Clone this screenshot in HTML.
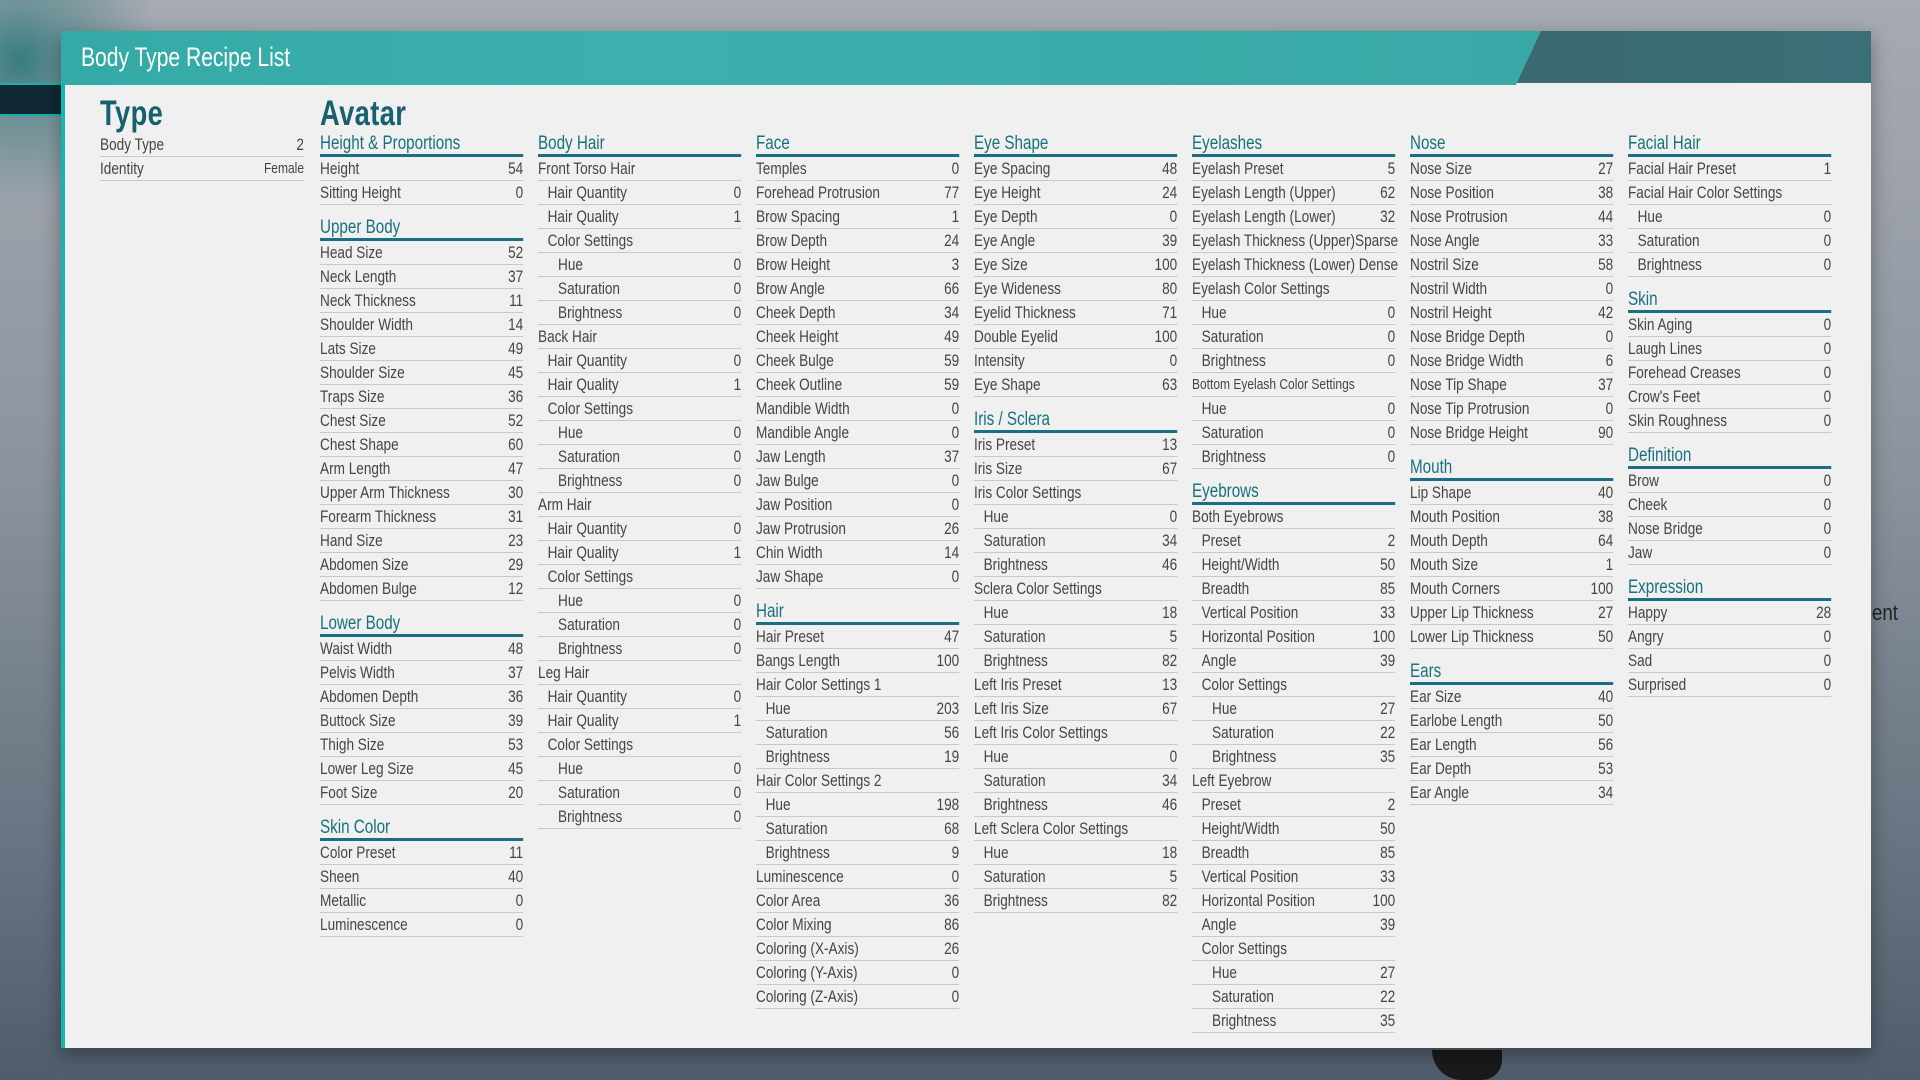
<!DOCTYPE html>
<html><head><meta charset="utf-8"><style>
*{margin:0;padding:0;box-sizing:border-box}
html,body{width:1920px;height:1080px;overflow:hidden}
body{background:linear-gradient(180deg,#a6aab2 0%,#8f96a0 40%,#6b7784 75%,#4f5d6b 100%);font-family:"Liberation Sans",sans-serif;position:relative}
.splat{position:absolute;left:0;top:0;width:300px;height:300px;background:radial-gradient(circle at 20px 60px,rgba(20,110,110,.75) 0,rgba(20,110,110,.4) 50px,rgba(20,110,110,0) 140px)}
.band{position:absolute;left:0;top:83px;width:62px;height:33px;background:#0f2833;border-top:2px solid #1ab0ab;border-bottom:2px solid #1ab0ab}
.panel{position:absolute;left:61px;top:31px;width:1810px;height:1017px;background:#f0f0f0;box-shadow:0 6px 18px rgba(0,0,0,.35)}
.lb{position:absolute;left:0;top:52px;width:4px;bottom:0;background:#16b6b0}
.hd{position:absolute;left:0;top:0;width:1810px;height:52px;background:linear-gradient(90deg,#3c4e58 0%,#3b6f78 100%)}
.hdt{position:absolute;left:0;top:0;width:1480px;height:54px;background:linear-gradient(90deg,#34aaa7,#3cb0ad 40%,#3aa8a6 100%);clip-path:polygon(0 0,100% 0,98.3% 100%,0 100%)}
.title{position:absolute;left:20px;top:11px;color:#fff;font-size:27px;transform:scaleX(.78);transform-origin:left;white-space:nowrap}
.big{position:absolute;top:94px;color:#17606e;font-size:35px;font-weight:bold;transform:scaleX(.78);transform-origin:left;letter-spacing:.5px}
.col{position:absolute;top:133px;width:254px;transform:scaleX(.8);transform-origin:left top;color:#454545;font-size:17px}
.r{height:24px;line-height:23px;border-bottom:1px solid #c9c9c9;display:flex;justify-content:space-between;white-space:nowrap}
.r b{font-weight:normal}
.h{height:24px;line-height:22px;border-bottom:3px solid #1a7080;color:#17717f;font-size:19px}
.g{margin-top:12px}
.i1{padding-left:12px}.i2{padding-left:25px}
.sm{font-size:15px}
.ent{position:absolute;left:1872px;top:600px;color:#222;font-size:22px;transform:scaleX(.85);transform-origin:left}
.boot{position:absolute;left:1432px;top:1050px;width:70px;height:30px;background:#1a1a1a;border-radius:0 0 20px 30px}
</style></head><body>
<div class="splat"></div>
<div class="band"></div>
<div class="ent">ent</div>
<div class="boot"></div>
<div class="panel">
<div class="hd"></div><div class="hdt"></div>
<div class="title">Body Type Recipe List</div>
<div class="lb"></div>
</div>
<div class="big" style="left:100px">Type</div>
<div class="big" style="left:320px">Avatar</div>

<div class="col" style="left:100px;width:255px">
<div class="r"><span>Body Type</span><b>2</b></div>
<div class="r"><span>Identity</span><b style="font-size:15px">Female</b></div>
</div>

<div class="col" style="left:320px">
<div class="h">Height &amp; Proportions</div>
<div class="r"><span>Height</span><b>54</b></div>
<div class="r"><span>Sitting Height</span><b>0</b></div>
<div class="h g">Upper Body</div>
<div class="r"><span>Head Size</span><b>52</b></div>
<div class="r"><span>Neck Length</span><b>37</b></div>
<div class="r"><span>Neck Thickness</span><b>11</b></div>
<div class="r"><span>Shoulder Width</span><b>14</b></div>
<div class="r"><span>Lats Size</span><b>49</b></div>
<div class="r"><span>Shoulder Size</span><b>45</b></div>
<div class="r"><span>Traps Size</span><b>36</b></div>
<div class="r"><span>Chest Size</span><b>52</b></div>
<div class="r"><span>Chest Shape</span><b>60</b></div>
<div class="r"><span>Arm Length</span><b>47</b></div>
<div class="r"><span>Upper Arm Thickness</span><b>30</b></div>
<div class="r"><span>Forearm Thickness</span><b>31</b></div>
<div class="r"><span>Hand Size</span><b>23</b></div>
<div class="r"><span>Abdomen Size</span><b>29</b></div>
<div class="r"><span>Abdomen Bulge</span><b>12</b></div>
<div class="h g">Lower Body</div>
<div class="r"><span>Waist Width</span><b>48</b></div>
<div class="r"><span>Pelvis Width</span><b>37</b></div>
<div class="r"><span>Abdomen Depth</span><b>36</b></div>
<div class="r"><span>Buttock Size</span><b>39</b></div>
<div class="r"><span>Thigh Size</span><b>53</b></div>
<div class="r"><span>Lower Leg Size</span><b>45</b></div>
<div class="r"><span>Foot Size</span><b>20</b></div>
<div class="h g">Skin Color</div>
<div class="r"><span>Color Preset</span><b>11</b></div>
<div class="r"><span>Sheen</span><b>40</b></div>
<div class="r"><span>Metallic</span><b>0</b></div>
<div class="r"><span>Luminescence</span><b>0</b></div>
</div>

<div class="col" style="left:538px">
<div class="h">Body Hair</div>
<div class="r"><span>Front Torso Hair</span><b></b></div>
<div class="r i1"><span>Hair Quantity</span><b>0</b></div>
<div class="r i1"><span>Hair Quality</span><b>1</b></div>
<div class="r i1"><span>Color Settings</span><b></b></div>
<div class="r i2"><span>Hue</span><b>0</b></div>
<div class="r i2"><span>Saturation</span><b>0</b></div>
<div class="r i2"><span>Brightness</span><b>0</b></div>
<div class="r"><span>Back Hair</span><b></b></div>
<div class="r i1"><span>Hair Quantity</span><b>0</b></div>
<div class="r i1"><span>Hair Quality</span><b>1</b></div>
<div class="r i1"><span>Color Settings</span><b></b></div>
<div class="r i2"><span>Hue</span><b>0</b></div>
<div class="r i2"><span>Saturation</span><b>0</b></div>
<div class="r i2"><span>Brightness</span><b>0</b></div>
<div class="r"><span>Arm Hair</span><b></b></div>
<div class="r i1"><span>Hair Quantity</span><b>0</b></div>
<div class="r i1"><span>Hair Quality</span><b>1</b></div>
<div class="r i1"><span>Color Settings</span><b></b></div>
<div class="r i2"><span>Hue</span><b>0</b></div>
<div class="r i2"><span>Saturation</span><b>0</b></div>
<div class="r i2"><span>Brightness</span><b>0</b></div>
<div class="r"><span>Leg Hair</span><b></b></div>
<div class="r i1"><span>Hair Quantity</span><b>0</b></div>
<div class="r i1"><span>Hair Quality</span><b>1</b></div>
<div class="r i1"><span>Color Settings</span><b></b></div>
<div class="r i2"><span>Hue</span><b>0</b></div>
<div class="r i2"><span>Saturation</span><b>0</b></div>
<div class="r i2"><span>Brightness</span><b>0</b></div>
</div>

<div class="col" style="left:756px">
<div class="h">Face</div>
<div class="r"><span>Temples</span><b>0</b></div>
<div class="r"><span>Forehead Protrusion</span><b>77</b></div>
<div class="r"><span>Brow Spacing</span><b>1</b></div>
<div class="r"><span>Brow Depth</span><b>24</b></div>
<div class="r"><span>Brow Height</span><b>3</b></div>
<div class="r"><span>Brow Angle</span><b>66</b></div>
<div class="r"><span>Cheek Depth</span><b>34</b></div>
<div class="r"><span>Cheek Height</span><b>49</b></div>
<div class="r"><span>Cheek Bulge</span><b>59</b></div>
<div class="r"><span>Cheek Outline</span><b>59</b></div>
<div class="r"><span>Mandible Width</span><b>0</b></div>
<div class="r"><span>Mandible Angle</span><b>0</b></div>
<div class="r"><span>Jaw Length</span><b>37</b></div>
<div class="r"><span>Jaw Bulge</span><b>0</b></div>
<div class="r"><span>Jaw Position</span><b>0</b></div>
<div class="r"><span>Jaw Protrusion</span><b>26</b></div>
<div class="r"><span>Chin Width</span><b>14</b></div>
<div class="r"><span>Jaw Shape</span><b>0</b></div>
<div class="h g">Hair</div>
<div class="r"><span>Hair Preset</span><b>47</b></div>
<div class="r"><span>Bangs Length</span><b>100</b></div>
<div class="r"><span>Hair Color Settings 1</span><b></b></div>
<div class="r i1"><span>Hue</span><b>203</b></div>
<div class="r i1"><span>Saturation</span><b>56</b></div>
<div class="r i1"><span>Brightness</span><b>19</b></div>
<div class="r"><span>Hair Color Settings 2</span><b></b></div>
<div class="r i1"><span>Hue</span><b>198</b></div>
<div class="r i1"><span>Saturation</span><b>68</b></div>
<div class="r i1"><span>Brightness</span><b>9</b></div>
<div class="r"><span>Luminescence</span><b>0</b></div>
<div class="r"><span>Color Area</span><b>36</b></div>
<div class="r"><span>Color Mixing</span><b>86</b></div>
<div class="r"><span>Coloring (X-Axis)</span><b>26</b></div>
<div class="r"><span>Coloring (Y-Axis)</span><b>0</b></div>
<div class="r"><span>Coloring (Z-Axis)</span><b>0</b></div>
</div>

<div class="col" style="left:974px">
<div class="h">Eye Shape</div>
<div class="r"><span>Eye Spacing</span><b>48</b></div>
<div class="r"><span>Eye Height</span><b>24</b></div>
<div class="r"><span>Eye Depth</span><b>0</b></div>
<div class="r"><span>Eye Angle</span><b>39</b></div>
<div class="r"><span>Eye Size</span><b>100</b></div>
<div class="r"><span>Eye Wideness</span><b>80</b></div>
<div class="r"><span>Eyelid Thickness</span><b>71</b></div>
<div class="r"><span>Double Eyelid</span><b>100</b></div>
<div class="r"><span>Intensity</span><b>0</b></div>
<div class="r"><span>Eye Shape</span><b>63</b></div>
<div class="h g">Iris / Sclera</div>
<div class="r"><span>Iris Preset</span><b>13</b></div>
<div class="r"><span>Iris Size</span><b>67</b></div>
<div class="r"><span>Iris Color Settings</span><b></b></div>
<div class="r i1"><span>Hue</span><b>0</b></div>
<div class="r i1"><span>Saturation</span><b>34</b></div>
<div class="r i1"><span>Brightness</span><b>46</b></div>
<div class="r"><span>Sclera Color Settings</span><b></b></div>
<div class="r i1"><span>Hue</span><b>18</b></div>
<div class="r i1"><span>Saturation</span><b>5</b></div>
<div class="r i1"><span>Brightness</span><b>82</b></div>
<div class="r"><span>Left Iris Preset</span><b>13</b></div>
<div class="r"><span>Left Iris Size</span><b>67</b></div>
<div class="r"><span>Left Iris Color Settings</span><b></b></div>
<div class="r i1"><span>Hue</span><b>0</b></div>
<div class="r i1"><span>Saturation</span><b>34</b></div>
<div class="r i1"><span>Brightness</span><b>46</b></div>
<div class="r"><span>Left Sclera Color Settings</span><b></b></div>
<div class="r i1"><span>Hue</span><b>18</b></div>
<div class="r i1"><span>Saturation</span><b>5</b></div>
<div class="r i1"><span>Brightness</span><b>82</b></div>
</div>

<div class="col" style="left:1192px">
<div class="h">Eyelashes</div>
<div class="r"><span>Eyelash Preset</span><b>5</b></div>
<div class="r"><span>Eyelash Length (Upper)</span><b>62</b></div>
<div class="r"><span>Eyelash Length (Lower)</span><b>32</b></div>
<div class="r"><span>Eyelash Thickness (Upper)Sparse</span><b></b></div>
<div class="r"><span>Eyelash Thickness (Lower) Dense</span><b></b></div>
<div class="r"><span>Eyelash Color Settings</span><b></b></div>
<div class="r i1"><span>Hue</span><b>0</b></div>
<div class="r i1"><span>Saturation</span><b>0</b></div>
<div class="r i1"><span>Brightness</span><b>0</b></div>
<div class="r sm"><span>Bottom Eyelash Color Settings</span><b></b></div>
<div class="r i1"><span>Hue</span><b>0</b></div>
<div class="r i1"><span>Saturation</span><b>0</b></div>
<div class="r i1"><span>Brightness</span><b>0</b></div>
<div class="h g">Eyebrows</div>
<div class="r"><span>Both Eyebrows</span><b></b></div>
<div class="r i1"><span>Preset</span><b>2</b></div>
<div class="r i1"><span>Height/Width</span><b>50</b></div>
<div class="r i1"><span>Breadth</span><b>85</b></div>
<div class="r i1"><span>Vertical Position</span><b>33</b></div>
<div class="r i1"><span>Horizontal Position</span><b>100</b></div>
<div class="r i1"><span>Angle</span><b>39</b></div>
<div class="r i1"><span>Color Settings</span><b></b></div>
<div class="r i2"><span>Hue</span><b>27</b></div>
<div class="r i2"><span>Saturation</span><b>22</b></div>
<div class="r i2"><span>Brightness</span><b>35</b></div>
<div class="r"><span>Left Eyebrow</span><b></b></div>
<div class="r i1"><span>Preset</span><b>2</b></div>
<div class="r i1"><span>Height/Width</span><b>50</b></div>
<div class="r i1"><span>Breadth</span><b>85</b></div>
<div class="r i1"><span>Vertical Position</span><b>33</b></div>
<div class="r i1"><span>Horizontal Position</span><b>100</b></div>
<div class="r i1"><span>Angle</span><b>39</b></div>
<div class="r i1"><span>Color Settings</span><b></b></div>
<div class="r i2"><span>Hue</span><b>27</b></div>
<div class="r i2"><span>Saturation</span><b>22</b></div>
<div class="r i2"><span>Brightness</span><b>35</b></div>
</div>

<div class="col" style="left:1410px">
<div class="h">Nose</div>
<div class="r"><span>Nose Size</span><b>27</b></div>
<div class="r"><span>Nose Position</span><b>38</b></div>
<div class="r"><span>Nose Protrusion</span><b>44</b></div>
<div class="r"><span>Nose Angle</span><b>33</b></div>
<div class="r"><span>Nostril Size</span><b>58</b></div>
<div class="r"><span>Nostril Width</span><b>0</b></div>
<div class="r"><span>Nostril Height</span><b>42</b></div>
<div class="r"><span>Nose Bridge Depth</span><b>0</b></div>
<div class="r"><span>Nose Bridge Width</span><b>6</b></div>
<div class="r"><span>Nose Tip Shape</span><b>37</b></div>
<div class="r"><span>Nose Tip Protrusion</span><b>0</b></div>
<div class="r"><span>Nose Bridge Height</span><b>90</b></div>
<div class="h g">Mouth</div>
<div class="r"><span>Lip Shape</span><b>40</b></div>
<div class="r"><span>Mouth Position</span><b>38</b></div>
<div class="r"><span>Mouth Depth</span><b>64</b></div>
<div class="r"><span>Mouth Size</span><b>1</b></div>
<div class="r"><span>Mouth Corners</span><b>100</b></div>
<div class="r"><span>Upper Lip Thickness</span><b>27</b></div>
<div class="r"><span>Lower Lip Thickness</span><b>50</b></div>
<div class="h g">Ears</div>
<div class="r"><span>Ear Size</span><b>40</b></div>
<div class="r"><span>Earlobe Length</span><b>50</b></div>
<div class="r"><span>Ear Length</span><b>56</b></div>
<div class="r"><span>Ear Depth</span><b>53</b></div>
<div class="r"><span>Ear Angle</span><b>34</b></div>
</div>

<div class="col" style="left:1628px">
<div class="h">Facial Hair</div>
<div class="r"><span>Facial Hair Preset</span><b>1</b></div>
<div class="r"><span>Facial Hair Color Settings</span><b></b></div>
<div class="r i1"><span>Hue</span><b>0</b></div>
<div class="r i1"><span>Saturation</span><b>0</b></div>
<div class="r i1"><span>Brightness</span><b>0</b></div>
<div class="h g">Skin</div>
<div class="r"><span>Skin Aging</span><b>0</b></div>
<div class="r"><span>Laugh Lines</span><b>0</b></div>
<div class="r"><span>Forehead Creases</span><b>0</b></div>
<div class="r"><span>Crow's Feet</span><b>0</b></div>
<div class="r"><span>Skin Roughness</span><b>0</b></div>
<div class="h g">Definition</div>
<div class="r"><span>Brow</span><b>0</b></div>
<div class="r"><span>Cheek</span><b>0</b></div>
<div class="r"><span>Nose Bridge</span><b>0</b></div>
<div class="r"><span>Jaw</span><b>0</b></div>
<div class="h g">Expression</div>
<div class="r"><span>Happy</span><b>28</b></div>
<div class="r"><span>Angry</span><b>0</b></div>
<div class="r"><span>Sad</span><b>0</b></div>
<div class="r"><span>Surprised</span><b>0</b></div>
</div>
</body></html>
